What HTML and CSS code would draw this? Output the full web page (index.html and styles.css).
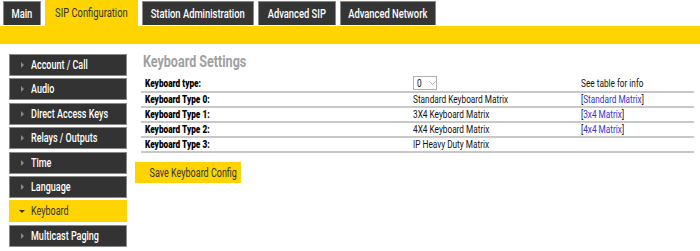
FILE: index.html
```html
<!DOCTYPE html>
<html>
<head>
<meta charset="utf-8">
<link rel="stylesheet" href="styles.css">
</head>
<body>
<div class="tabs">
  <div class="tab w-main"><span class="n c">Main</span></div>
  <div class="tab active w-sip"><span class="n c">SIP Configuration</span></div>
  <div class="tab w-sta"><span class="n c">Station Administration</span></div>
  <div class="tab w-asip"><span class="n c">Advanced SIP</span></div>
  <div class="tab w-anet"><span class="n c">Advanced Network</span></div>
</div>
<div class="bar"></div>
<div class="main">
  <div class="side">
    <div class="item"><span class="arr"></span><span class="n">Account / Call</span></div>
    <div class="item"><span class="arr"></span><span class="n">Audio</span></div>
    <div class="item"><span class="arr"></span><span class="n">Direct Access Keys</span></div>
    <div class="item"><span class="arr"></span><span class="n">Relays / Outputs</span></div>
    <div class="item"><span class="arr"></span><span class="n">Time</span></div>
    <div class="item"><span class="arr"></span><span class="n">Language</span></div>
    <div class="item on"><span class="arr down"></span><span class="n">Keyboard</span></div>
    <div class="item"><span class="arr"></span><span class="n">Multicast Paging</span></div>
  </div>
  <div class="content">
    <h1 class="title"><span class="n">Keyboard Settings</span></h1>
    <table class="grid">
      <tr class="first"><td class="lab"><span class="n">Keyboard type:</span></td><td class="val"><span class="sel"><span class="n">0</span><svg width="7" height="4" viewBox="0 0 7 4"><path d="M0.5 0.5 L3.5 3.5 L6.5 0.5" fill="none" stroke="#aaa" stroke-width="1"/></svg></span></td><td class="info"><span class="n">See table for info</span></td></tr>
      <tr><td class="lab"><span class="n">Keyboard Type 0:</span></td><td class="val"><span class="n">Standard Keyboard Matrix</span></td><td class="info"><span class="n">[<a>Standard Matrix</a>]</span></td></tr>
      <tr><td class="lab"><span class="n">Keyboard Type 1:</span></td><td class="val"><span class="n">3X4 Keyboard Matrix</span></td><td class="info"><span class="n">[<a>3x4 Matrix</a>]</span></td></tr>
      <tr><td class="lab"><span class="n">Keyboard Type 2:</span></td><td class="val"><span class="n">4X4 Keyboard Matrix</span></td><td class="info"><span class="n">[<a>4x4 Matrix</a>]</span></td></tr>
      <tr><td class="lab"><span class="n">Keyboard Type 3:</span></td><td class="val"><span class="n">IP Heavy Duty Matrix</span></td><td class="info"></td></tr>
    </table>
    <button class="save"><span class="n c">Save Keyboard Config</span></button>
  </div>
</div>
</body>
</html>
```
FILE: styles.css
```css
body {
  margin: 0;
  font-family: "Roboto", "Liberation Sans", sans-serif;
  background: #fff;
  width: 700px;
  height: 251px;
  overflow: hidden;
}
.n {
  display: inline-block;
  white-space: nowrap;
  transform: scaleX(0.75);
  transform-origin: left center;
}
.n.c {
  transform-origin: center center;
}
.tabs {
  display: flex;
  gap: 4px;
  padding-left: 3px;
  padding-top: 1px;
  height: 25px;
  align-items: flex-start;
}
.tab {
  background: #353535;
  color: #fff;
  border: 1px solid #8a8a8a;
  border-bottom: none;
  height: 24px;
  box-sizing: border-box;
  font-size: 12.5px;
  font-weight: 500;
  line-height: 23px;
  display: flex;
  justify-content: center;
  overflow: visible;
}
.w-main { width: 38px; }
.w-sip { width: 93px; }
.w-sta { width: 112px; }
.w-asip { width: 78px; }
.w-anet { width: 96px; }
.tab.active {
  background: #ffd400;
  color: #333;
  border-color: #ffd400;
  height: 26px;
  margin-top: -1px;
  line-height: 24px;
  font-weight: 400;
}
.bar {
  height: 18px;
  background: #ffd400;
}
.main {
  display: flex;
  padding-top: 10px;
}
.side {
  margin-left: 9px;
  width: 118px;
  display: flex;
  flex-direction: column;
  gap: 2.4px;
}
.item {
  height: 22px;
  box-sizing: border-box;
  background: #333;
  border: 1px solid #8a8a8a;
  color: #fff;
  font-size: 12px;
  font-weight: 500;
  line-height: 20px;
  display: flex;
  align-items: center;
}
.item.on {
  background: #ffd400;
  border-color: #ffd400;
  color: #333;
  font-weight: 400;
}
.arr {
  flex: none;
  width: 0;
  height: 0;
  border-left: 3px solid #8a8a8a;
  border-top: 3px solid transparent;
  border-bottom: 3px solid transparent;
  margin-left: 11px;
  margin-right: 7px;
}
.arr.down {
  border-left: 3px solid transparent;
  border-right: 3px solid transparent;
  border-top: 3px solid #333;
  border-bottom: none;
  margin-left: 9px;
  margin-right: 6px;
}
.content {
  margin-left: 8px;
  flex: 1;
}
.title {
  margin: 0 0 3px 8px;
  font-size: 16.5px;
  color: #a0a0a0;
  font-weight: bold;
  line-height: 16px;
}
.title .n {
  transform: scaleX(0.76);
}
.grid {
  margin-left: 6px;
  width: 553px;
  table-layout: fixed;
  border-collapse: collapse;
  font-size: 11px;
  color: #111;
}
.grid td {
  border-bottom: 2px solid #c8c8c8;
  height: 13px;
  padding: 0 4px;
  line-height: 13px;
  overflow: visible;
}
.grid tr.first td {
  height: 17px;
  vertical-align: bottom;
  padding-bottom: 1px;
}
.lab {
  width: 260px;
  font-weight: 900;
  color: #000;
}
.val {
  width: 160px;
}
.info a {
  color: #3333dd;
}
.sel {
  display: inline-flex;
  align-items: center;
  gap: 1px;
  border: 1px solid #b0b0b0;
  height: 14px;
  width: 24px;
  box-sizing: border-box;
  padding: 0 0 0 3px;
  vertical-align: bottom;
}
.sel .n {
  width: 11px;
}
.save {
  display: block;
  margin-top: 9px;
  width: 106px;
  background: #ffd400;
  border: none;
  color: #333;
  font-family: inherit;
  font-size: 12px;
  height: 21px;
  padding: 0;
  overflow: visible;
}
```
